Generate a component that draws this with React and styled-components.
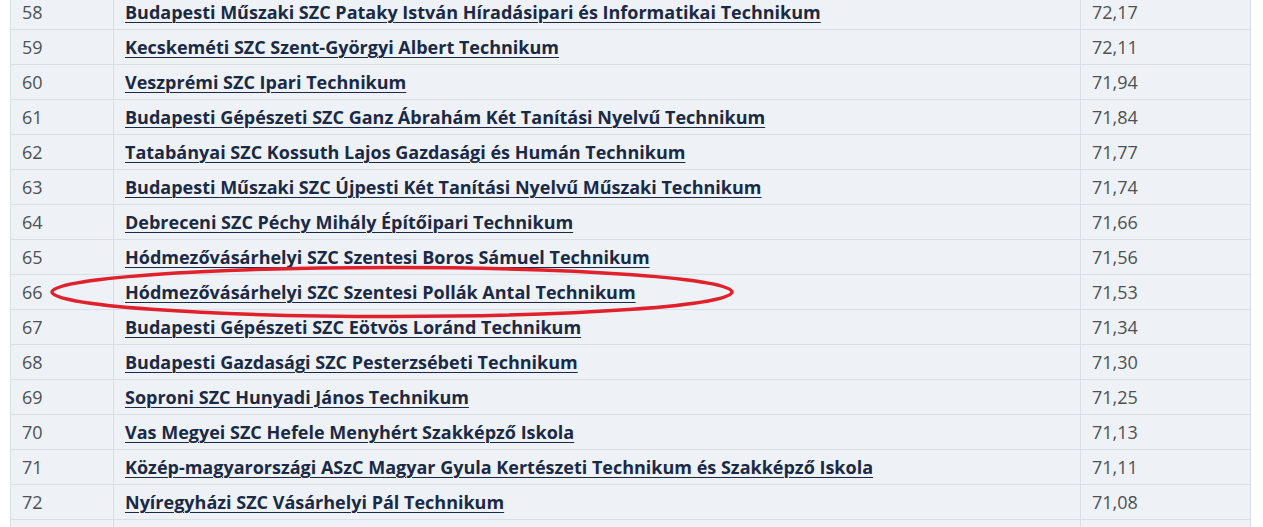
import React from "react";
import styled, { createGlobalStyle } from "styled-components";

const Global = createGlobalStyle`
  html, body { margin: 0; padding: 0; background: #ffffff; }
  body { font-family: "Open Sans", "Noto Sans", sans-serif; overflow: hidden; }
`;

const Page = styled.div`
  width: 1263px;
  height: 527px;
  overflow: hidden;
  padding-left: 10px;
  box-sizing: border-box;
`;

const Board = styled.div`
  position: relative;
  width: 1241px;
  margin-top: -5px;
  border-left: 1px solid #d9dfe7;
  border-right: 1px solid #d9dfe7;
  box-sizing: border-box;
`;

const Row = styled.div`
  display: grid;
  grid-template-columns: 102px 967px 170px;
  height: 35px;
  box-sizing: border-box;
  border-bottom: 1px solid #d9dfe7;
  background: #eef2f7;
`;

const Cell = styled.div`
  display: flex;
  align-items: center;
  padding-left: 11px;
  box-sizing: border-box;
  border-left: ${(p) => (p.$first ? "none" : "1px solid #d9dfe7")};
  font-size: 18px;
  color: #4d5054;
  white-space: nowrap;
  overflow: hidden;
`;

const SchoolLink = styled.a`
  font-weight: 700;
  font-size: 18px;
  color: #1a2945;
  text-decoration: underline;
  text-underline-offset: 3px;
  text-decoration-thickness: 1px;
  letter-spacing: 0;
`;

const Marker = styled.svg`
  position: absolute;
  left: 26px;
  top: 267px;
  width: 712px;
  height: 70px;
  pointer-events: none;
`;

const rows = [
  ["58", "Budapesti Műszaki SZC Pataky István Híradásipari és Informatikai Technikum", "72,17"],
  ["59", "Kecskeméti SZC Szent-Györgyi Albert Technikum", "72,11"],
  ["60", "Veszprémi SZC Ipari Technikum", "71,94"],
  ["61", "Budapesti Gépészeti SZC Ganz Ábrahám Két Tanítási Nyelvű Technikum", "71,84"],
  ["62", "Tatabányai SZC Kossuth Lajos Gazdasági és Humán Technikum", "71,77"],
  ["63", "Budapesti Műszaki SZC Újpesti Két Tanítási Nyelvű Műszaki Technikum", "71,74"],
  ["64", "Debreceni SZC Péchy Mihály Építőipari Technikum", "71,66"],
  ["65", "Hódmezővásárhelyi SZC Szentesi Boros Sámuel Technikum", "71,56"],
  ["66", "Hódmezővásárhelyi SZC Szentesi Pollák Antal Technikum", "71,53"],
  ["67", "Budapesti Gépészeti SZC Eötvös Loránd Technikum", "71,34"],
  ["68", "Budapesti Gazdasági SZC Pesterzsébeti Technikum", "71,30"],
  ["69", "Soproni SZC Hunyadi János Technikum", "71,25"],
  ["70", "Vas Megyei SZC Hefele Menyhért Szakképző Iskola", "71,13"],
  ["71", "Közép-magyarországi ASzC Magyar Gyula Kertészeti Technikum és Szakképző Iskola", "71,11"],
  ["72", "Nyíregyházi SZC Vásárhelyi Pál Technikum", "71,08"],
  ["", "", ""],
];

export default function App() {
  return (
    <>
      <Global />
      <Page>
        <Board>
          {rows.map(([rank, name, score], i) => (
            <Row key={i}>
              <Cell $first>{rank}</Cell>
              <Cell>{name && <SchoolLink href="#">{name}</SchoolLink>}</Cell>
              <Cell>{score}</Cell>
            </Row>
          ))}
          <Marker viewBox="0 0 712 70">
            <ellipse cx="355" cy="30" rx="340" ry="24.5" fill="none" stroke="#e0212b" strokeWidth="3.5" />
          </Marker>
        </Board>
      </Page>
    </>
  );
}
